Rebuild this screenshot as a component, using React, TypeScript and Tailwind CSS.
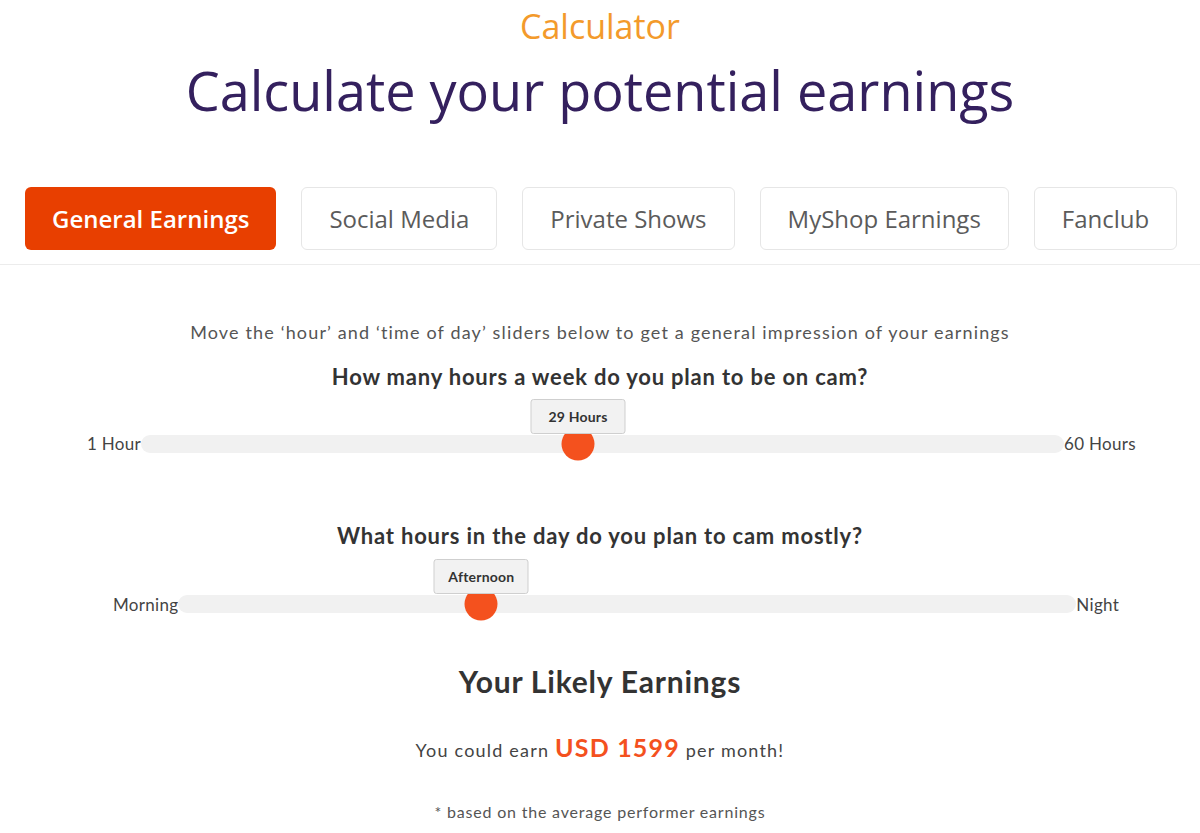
import React from 'react';

const tabs = ['General Earnings', 'Social Media', 'Private Shows', 'MyShop Earnings', 'Fanclub'];

const heading = { fontFamily: '"Open Sans", "Noto Sans", sans-serif' };
const body = { fontFamily: 'Lato, "Noto Sans", sans-serif' };

function Slider({
  left,
  right,
  tip,
  offset,
  trackWidth,
  thumbAt,
  tipWidth,
}: {
  left: string;
  right: string;
  tip: string;
  offset: string;
  trackWidth: string;
  thumbAt: number;
  tipWidth: number;
}) {
  return (
    <div className={`flex items-center text-[17px] tracking-[0.3px] text-[#444] ${offset}`}>
      <span>{left}</span>
      <div className={`relative h-[18px] rounded-full bg-[#f1f1f1] ${trackWidth}`}>
        <div
          className="absolute top-1/2 h-[33px] w-[33px] -translate-x-1/2 -translate-y-1/2 rounded-full bg-[#f4511e]"
          style={{ left: thumbAt }}
        />
        <div
          className="absolute bottom-[19px] h-[35px] -translate-x-1/2 rounded-[3px] border border-[#cfcfcf] bg-[#f2f2f2] text-center text-[14px] font-bold leading-[33px] tracking-[0.2px] text-[#333]"
          style={{ left: thumbAt, width: tipWidth }}
        >
          {tip}
        </div>
      </div>
      <span>{right}</span>
    </div>
  );
}

export default function App() {
  return (
    <div className="min-h-[833px] bg-white">
      <div className="pt-[4px] text-center" style={heading}>
        <p className="text-[34px] leading-[44px] text-[#f39a2b]">Calculator</p>
        <h1 className="mt-[10px] text-[54px] leading-[64px] text-[#34205e]">Calculate your potential earnings</h1>
      </div>

      <div className="mt-[65px] border-b border-[#ececec] pb-[14px]" style={heading}>
        <div className="flex gap-[25px] pl-[25px]">
          {tabs.map((t, i) => (
            <div
              key={t}
              className={
                i === 0
                  ? 'flex h-[63px] items-center rounded-[6px] bg-[#e83f00] px-[27px] text-[24px] font-semibold text-white'
                  : 'flex h-[63px] items-center rounded-[6px] border border-[#e6e6e6] px-[27px] text-[24px] text-[#5b5b5b]'
              }
            >
              {t}
            </div>
          ))}
        </div>
      </div>

      <div style={body}>
        <p className="mt-[54px] text-center text-[18px] leading-[26px] tracking-[1.15px] text-[#555]">
          Move the ‘hour’ and ‘time of day’ sliders below to get a general impression of your earnings
        </p>
        <h3 className="mt-[17px] text-center text-[22px] font-bold leading-[30px] tracking-[0.8px] text-[#333]">
          How many hours a week do you plan to be on cam?
        </h3>
        <div className="mt-[39px]">
          <Slider
            left="1 Hour"
            right="60 Hours"
            tip="29 Hours"
            offset="pl-[87px]"
            trackWidth="w-[923px]"
            thumbAt={437}
            tipWidth={95}
          />
        </div>

        <h3 className="mt-[64px] text-center text-[22px] font-bold leading-[30px] tracking-[0.8px] text-[#333]">
          What hours in the day do you plan to cam mostly?
        </h3>
        <div className="mt-[41px]">
          <Slider
            left="Morning"
            right="Night"
            tip="Afternoon"
            offset="pl-[113px]"
            trackWidth="w-[898px]"
            thumbAt={303}
            tipWidth={95}
          />
        </div>

        <h2 className="mt-[44px] text-center text-[30px] font-bold leading-[40px] tracking-[0.8px] text-[#333]">
          Your Likely Earnings
        </h2>
        <p className="mt-[31px] text-center text-[18px] leading-[30px] tracking-[1.2px] text-[#444]">
          You could earn <span className="text-[25px] font-bold text-[#f4511e]">USD 1599</span> per month!
        </p>
        <p className="mt-[35px] text-center text-[16px] leading-[24px] tracking-[0.8px] text-[#555]">
          * based on the average performer earnings
        </p>
      </div>
    </div>
  );
}
